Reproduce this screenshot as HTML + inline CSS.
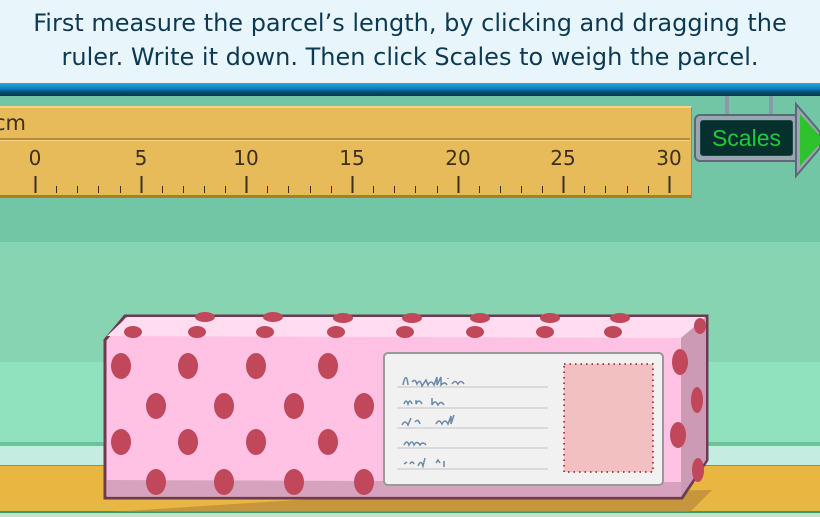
<!DOCTYPE html>
<html><head><meta charset="utf-8"><style>
*{margin:0;padding:0;box-sizing:border-box}
body{width:820px;height:517px;overflow:hidden;position:relative;background:#72c6a6;font-family:"DejaVu Sans","Liberation Sans",sans-serif}
.hdr{position:absolute;left:0;top:0;width:820px;height:83px;background:#e8f6fc;color:#0d3a52;font-size:24px;line-height:34px;text-align:center;padding-top:6px;white-space:nowrap}
.bar{position:absolute;left:0;top:83px;width:820px;height:13px;background:linear-gradient(#2aa6e0,#0a7fbf 45%,#0a4a6e 70%,#083a52)}
.abs{position:absolute}
</style></head><body>
<div class="hdr">First measure the parcel’s length, by clicking and dragging the<br>ruler. Write it down. Then click Scales to weigh the parcel.</div>
<div class="bar"></div>
<div class="abs" style="left:0;top:242px;width:820px;height:120px;background:#86d4b2"></div>
<div class="abs" style="left:0;top:362px;width:820px;height:80px;background:#8fe2bd"></div>
<div class="abs" style="left:0;top:442px;width:820px;height:4px;background:#6cc39a"></div>
<div class="abs" style="left:0;top:446px;width:820px;height:19px;background:#c4ece0"></div>
<div class="abs" style="left:0;top:465px;width:820px;height:46px;background:#e9b642;border-top:1px solid #b08a2a"></div>
<div class="abs" style="left:0;top:511px;width:820px;height:2px;background:#3d9a6a"></div>
<div class="abs" style="left:0;top:513px;width:820px;height:4px;background:#bfe6c8"></div>

<!-- ruler -->
<div class="abs" style="left:-2px;top:106px;width:694px;height:92px;background:#e8bb5a;border:1px solid #b5862e;border-bottom:3px solid #b07a28;border-top:2px solid #f6d58a"></div>
<div class="abs" style="left:0;top:138px;width:690px;height:3px;background:#b88a3a;border-bottom:1px solid #f3d289"></div>
<div class="abs" style="left:-6px;top:111px;font-size:21px;color:#3a3020">cm</div>
<svg class="abs" style="left:0;top:140px" width="692" height="60">
<g font-family="DejaVu Sans,sans-serif" font-size="20" fill="#3a3020" text-anchor="middle">
<text x="35" y="25">0</text><text x="141" y="25">5</text><text x="246" y="25">10</text><text x="352" y="25">15</text><text x="458" y="25">20</text><text x="563" y="25">25</text><text x="669" y="25">30</text></g>
<g stroke="#3a3020">
<path d="M35.5 36V53M141.5 36V53M246.5 36V53M352.5 36V53M458.5 36V53M563.5 36V53M669.5 36V53" stroke-width="2"/>
<path d="M56.5 46V53M77.5 46V53M98.5 46V53M120.5 46V53M162.5 46V53M183.5 46V53M204.5 46V53M225.5 46V53M267.5 46V53M288.5 46V53M310.5 46V53M331.5 46V53M373.5 46V53M394.5 46V53M415.5 46V53M437.5 46V53M479.5 46V53M500.5 46V53M521.5 46V53M542.5 46V53M584.5 46V53M605.5 46V53M627.5 46V53M648.5 46V53" stroke-width="1"/>
</g></svg>

<!-- scales sign -->
<div class="abs" style="left:725px;top:96px;width:4px;height:20px;background:#8a9aa8"></div>
<div class="abs" style="left:769px;top:96px;width:4px;height:20px;background:#8a9aa8"></div>
<div class="abs" style="left:694px;top:114px;width:106px;height:48px;background:#9aa6b2;border:2px solid #5c6a78;border-radius:6px"></div>
<div class="abs" style="left:700px;top:120px;width:93px;height:36px;background:#06302e;border:1px solid #1a4a48;border-radius:3px;color:#1ecb3a;font-size:23px;text-align:center;line-height:34px;font-family:'Liberation Sans',sans-serif">Scales</div>
<svg class="abs" style="left:793px;top:100px" width="27" height="80"><path d="M3 4 L27 32 L27 48 L3 76 Z" fill="#9aa6b2" stroke="#5c6a78" stroke-width="2"/><path d="M7 14 L27 36 L27 44 L7 66 Z" fill="#2ec22e"/></svg>

<!-- parcel -->
<svg class="abs" style="left:0;top:300px" width="820" height="217">
<path d="M112 212 L690 212 L712 190 L372 195 Z" fill="#b6883a" opacity="0.7"/>
<path d="M125 16 L707 16 L707 160 L682 198 L105 198 L105 40 Z" fill="#ffc2e4" stroke="#6e3a50" stroke-width="3"/>
<path d="M107 36 L127 17 L705 17 L681 38 Z" fill="#ffdcef"/>
<path d="M681 38 L706 17 L706 160 L681 197 Z" fill="#cc9ab4"/>
<path d="M107 180 L681 182 L681 197 L107 197 Z" fill="#cc9ab4" opacity=".8"/>
<g fill="#c0485a">
<ellipse cx="205" cy="17" rx="10" ry="5"/><ellipse cx="273" cy="17" rx="10" ry="5"/><ellipse cx="343" cy="18" rx="10" ry="5"/><ellipse cx="412" cy="18" rx="10" ry="5"/><ellipse cx="480" cy="18" rx="10" ry="5"/><ellipse cx="550" cy="18" rx="10" ry="5"/><ellipse cx="620" cy="18" rx="10" ry="5"/>
<ellipse cx="133" cy="32" rx="9" ry="6"/><ellipse cx="197" cy="32" rx="9" ry="6"/><ellipse cx="265" cy="32" rx="9" ry="6"/><ellipse cx="336" cy="32" rx="9" ry="6"/><ellipse cx="405" cy="32" rx="9" ry="6"/><ellipse cx="475" cy="32" rx="9" ry="6"/><ellipse cx="545" cy="32" rx="9" ry="6"/><ellipse cx="613" cy="32" rx="9" ry="6"/><ellipse cx="700" cy="26" rx="6" ry="8"/>
<ellipse cx="121" cy="66" rx="10" ry="13"/><ellipse cx="188" cy="66" rx="10" ry="13"/><ellipse cx="256" cy="66" rx="10" ry="13"/><ellipse cx="328" cy="66" rx="10" ry="13"/>
<ellipse cx="156" cy="106" rx="10" ry="13"/><ellipse cx="224" cy="106" rx="10" ry="13"/><ellipse cx="294" cy="106" rx="10" ry="13"/><ellipse cx="364" cy="106" rx="10" ry="13"/>
<ellipse cx="121" cy="142" rx="10" ry="13"/><ellipse cx="188" cy="142" rx="10" ry="13"/><ellipse cx="256" cy="142" rx="10" ry="13"/><ellipse cx="328" cy="142" rx="10" ry="13"/>
<ellipse cx="156" cy="182" rx="10" ry="13"/><ellipse cx="224" cy="182" rx="10" ry="13"/><ellipse cx="294" cy="182" rx="10" ry="13"/><ellipse cx="364" cy="182" rx="10" ry="13"/>
<ellipse cx="680" cy="62" rx="8" ry="13"/><ellipse cx="697" cy="100" rx="6" ry="13"/><ellipse cx="678" cy="135" rx="8" ry="13"/><ellipse cx="698" cy="170" rx="6" ry="12"/>
</g>
<rect x="384" y="53" width="279" height="132" rx="4" fill="#f1f1f1" stroke="#999" stroke-width="2"/>
<rect x="564" y="64" width="89" height="108" fill="#f2c0c0" stroke="#a01010" stroke-width="1.5" stroke-dasharray="1.5 4"/>
<g stroke="#c4c4c4" stroke-width="1"><path d="M397 87H548M397 108H548M397 128H548M397 148H548M397 169H548"/></g>
<g fill="none" stroke="#6a88a8" stroke-width="1.5">
<path d="M403 85 C405 75 407 75 408 85 M412 82 q3 -4 5 2 q3 -6 5 2 l4 -6 l2 5 q3-6 6 0 l3-8 v8 l4-8 v8 q4 -4 6 0 M448 78v1 M452 84q3-5 6 0q3-5 6 0"/>
<path d="M404 104 q2-6 4 0 q2-6 4 0 M416 100 v4 q3-6 6 0 M432 98v7q3-6 6 0 q3-5 6 0"/>
<path d="M402 125 q3-6 6 0 l3-7 M415 122q3-4 5 2 M436 124q3-6 6 0 q3-6 6 0 l3-8v8 l3-9"/>
<path d="M404 145 q3-6 5 0 q3-6 5 0 q3-5 6 0 q3-4 6 0"/>
<path d="M404 164 l3-2 M410 164 q2-4 4 0 M418 166 q3-7 5 0 l2-8 M436 163 l2-3 l2 3 M444 161 v6"/>
</g>
</svg>
</body></html>
